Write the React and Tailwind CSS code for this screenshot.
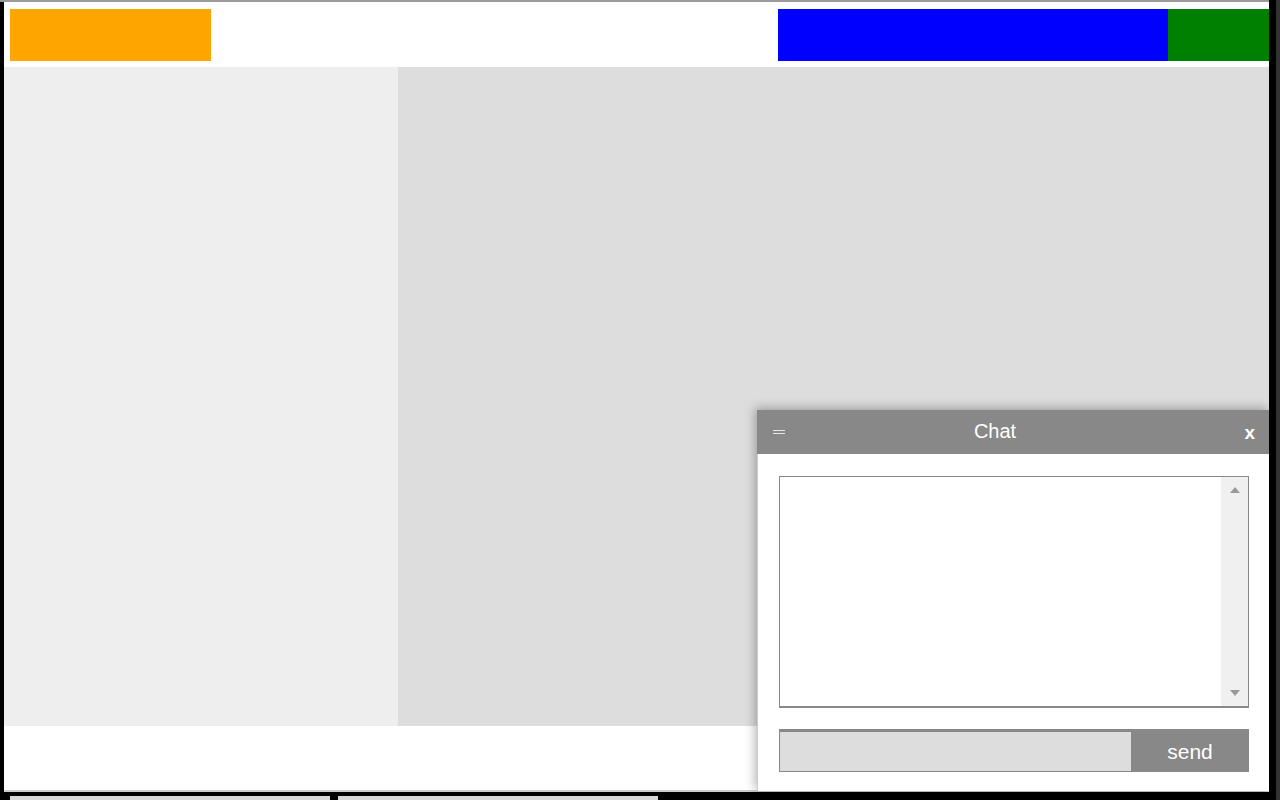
export default function App() {
  const font = { fontFamily: '"Liberation Sans", Arial, sans-serif' };
  return (
    <div className="w-[1280px] h-[800px] bg-black relative overflow-hidden flex" style={font}>
      <div className="w-[1276px] h-[800px] flex flex-col">
        <div className="h-[3px] w-[1269px] bg-[#9a9a9a]" />
        <div className="flex">
          <div className="w-[4px] bg-black" />
          <div className="w-[1265px] flex flex-col">
            {/* header */}
            <div className="h-[65px] bg-white flex items-start pt-[7px]">
              <div className="ml-[6px] w-[201px] h-[52px] bg-[#ffa500]" />
              <div className="flex-1" />
              <div className="w-[390px] h-[52px] bg-[#0000ff]" />
              <div className="w-[101px] h-[52px] bg-[#008000]" />
            </div>
            {/* main */}
            <div className="h-[659px] flex">
              <div className="w-[394px] bg-[#eeeeee]" />
              <div className="flex-1 bg-[#dddddd]" />
            </div>
            {/* footer */}
            <div className="h-[64px] bg-white" />
            <div className="h-[2px] bg-[#cccccc]" />
          </div>
        </div>
        <div className="flex gap-[8px] pl-[10px] mt-[4px]">
          <div className="w-[320px] h-[4px] bg-[#d8d8d8]" />
          <div className="w-[320px] h-[4px] bg-[#d8d8d8]" />
        </div>
      </div>
      <div className="w-[4px] h-[800px] bg-[#333333]" />

      {/* chat panel */}
      <div className="absolute left-[757px] top-[410px] w-[512px] h-[381px] bg-white shadow-[-2px_-2px_10px_rgba(0,0,0,0.3)] flex flex-col">
        <div className="h-[44px] bg-[#888888] flex items-center text-white">
          <div className="w-[40px] flex flex-col gap-[2px] pl-[16px]">
            <div className="w-[12px] h-[1px] bg-[#e6e6e6]" />
            <div className="w-[12px] h-[1px] bg-[#e6e6e6]" />
          </div>
          <div className="flex-1 text-center text-[20px] leading-none pb-[2px]">Chat</div>
          <div className="w-[76px] flex justify-end pr-[14px] text-[19px] font-bold leading-none">x</div>
        </div>
        <div className="flex-1 border-l border-[#cccccc] pl-[21px] pt-[22px] flex flex-col">
          <div className="w-[470px] h-[232px] border border-[#888888] border-b-2 flex justify-end">
            <div className="w-[27px] h-full bg-[#f0f0f0] flex flex-col items-center justify-between py-[10px]">
              <svg width="10" height="6" viewBox="0 0 10 6"><path d="M5 0 L10 6 L0 6 Z" fill="#999" /></svg>
              <svg width="10" height="6" viewBox="0 0 10 6"><path d="M0 0 L10 0 L5 6 Z" fill="#999" /></svg>
            </div>
          </div>
          <div className="mt-[21px] flex w-[470px] h-[43px]">
            <div className="w-[352px] h-full bg-[#dddddd] border-t-[3px] border-l border-b border-[#888888]" />
            <div className="flex-1 bg-[#888888] flex items-center justify-center text-white text-[21px] pt-[2px]">send</div>
          </div>
        </div>
      </div>
    </div>
  );
}
